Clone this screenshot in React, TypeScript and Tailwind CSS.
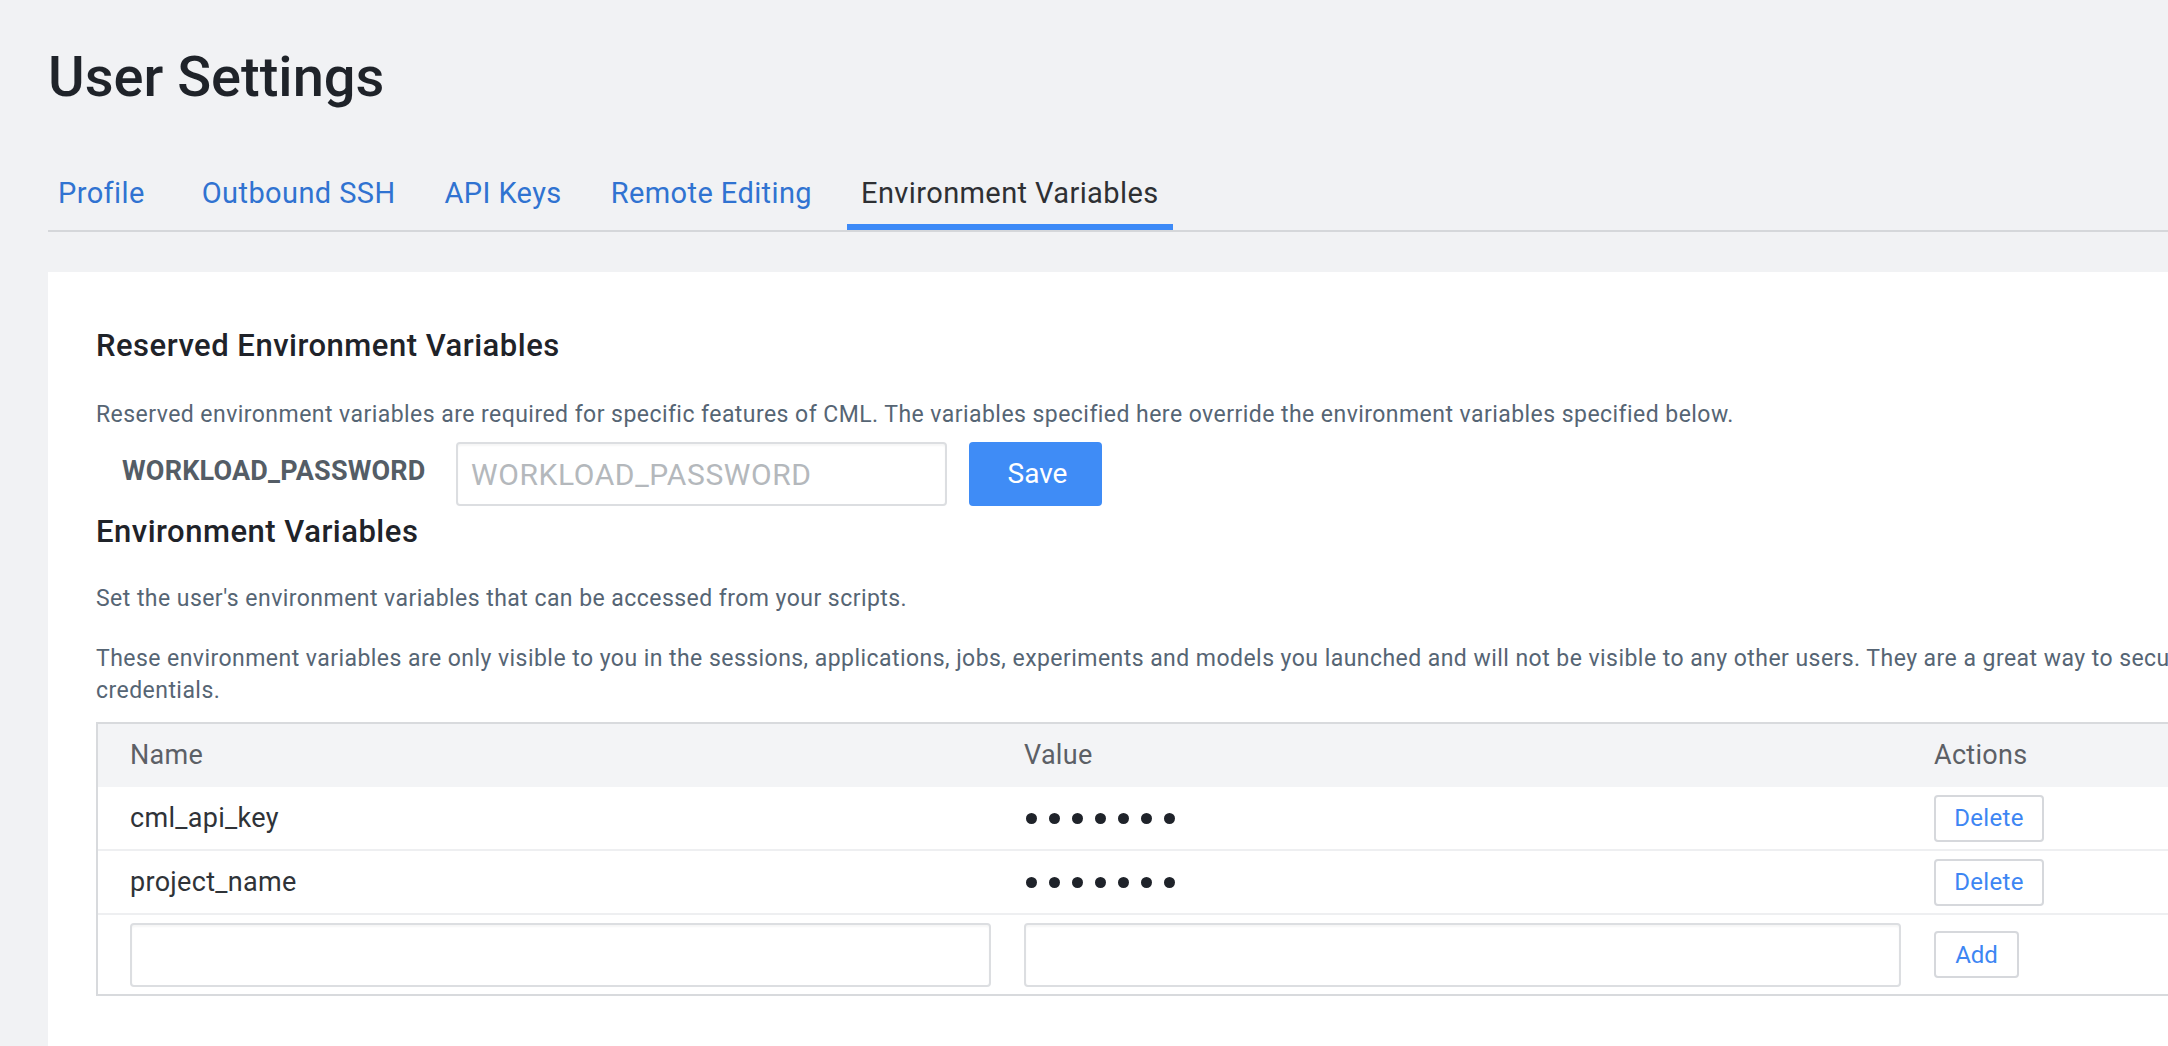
import { useState } from "react";

const tabs = ["Profile", "Outbound SSH", "API Keys", "Remote Editing", "Environment Variables"];

const envVars = [
    { name: "cml_api_key", value: "secret1" },
    { name: "project_name", value: "secret2" },
];

function Dots() {
    return (
        <div className="flex items-center gap-[12px]" aria-label="•••••••">
            {[0, 1, 2, 3, 4, 5, 6].map((i) => (
                <span key={i} className="w-[11px] h-[11px] rounded-full bg-[#1f232a]" />
            ))}
        </div>
    );
}

export default function App() {
    const [active] = useState("Environment Variables");
    const [password, setPassword] = useState("");
    const [newName, setNewName] = useState("");
    const [newValue, setNewValue] = useState("");

    return (
        <div className="min-h-screen w-full overflow-hidden bg-[#f1f2f4] font-['Roboto','Liberation_Sans',sans-serif]">
            <div className="pl-12 w-[2404px]">
                <h1 className="pt-[44px] text-[56px] leading-[1.2] font-medium text-[#1f2329]">
                    User Settings
                </h1>

                <nav className="mt-[53px] flex items-end gap-[21px] border-b-2 border-[#d5d7da]">
                    {tabs.map((tab, i) => (
                        <div
                            key={tab}
                            className={
                                (i === 0 ? "mr-[8px] pl-[10px] pr-[14px] " : "px-[14px] ") +
                                (tab === active
                                    ? "pt-[12px] pb-[14px] border-b-[6px] border-[#3d8af7] text-[29px] tracking-[0.4px] leading-[34px] text-[#2e3033]"
                                    : "pt-[12px] pb-[14px] border-b-[6px] border-transparent text-[29px] tracking-[0.4px] leading-[34px] text-[#3073d1]")
                            }
                        >
                            {tab}
                        </div>
                    ))}
                </nav>

                <div className="mt-10 bg-white px-12 pt-[56px] pb-16">
                    <h2 className="text-[31px] tracking-[0.5px] leading-[35px] font-medium text-[#1f2329]">
                        Reserved Environment Variables
                    </h2>
                    <p className="mt-[36px] text-[23px] tracking-[0.45px] leading-[32px] text-[#566574]">
                        Reserved environment variables are required for specific features of CML. The variables specified here override the environment variables specified below.
                    </p>

                    <div className="mt-[11px] flex items-center">
                        <label className="pl-[26px] w-[360px] text-[27px] tracking-[0.2px] font-bold text-[#545d66] pb-[6px]">
                            WORKLOAD_PASSWORD
                        </label>
                        <input
                            type="password"
                            value={password}
                            onChange={(e) => setPassword(e.target.value)}
                            placeholder="WORKLOAD_PASSWORD"
                            className="w-[491px] h-16 px-[13px] border-2 border-[#dcdee1] rounded-[4px] text-[30px] tracking-[0.6px] text-[#1f2329] placeholder:text-[#b4b8bc] outline-none shadow-[inset_0_2px_2px_rgba(0,0,0,0.04)]"
                        />
                        <button className="ml-[22px] w-[133px] h-16 rounded-[4px] bg-[#3f8cf6] text-white text-[28px] pl-[4px]">
                            Save
                        </button>
                    </div>

                    <h2 className="mt-[8px] text-[31px] tracking-[0.5px] leading-[35px] font-medium text-[#1f2329]">
                        Environment Variables
                    </h2>
                    <p className="mt-[34px] text-[23px] tracking-[0.45px] leading-[32px] text-[#566574]">
                        Set the user's environment variables that can be accessed from your scripts.
                    </p>
                    <p className="mt-[28px] text-[23px] tracking-[0.45px] leading-[32px] text-[#566574]">
                        These environment variables are only visible to you in the sessions, applications, jobs, experiments and models you launched and will not be visible to any other users. They are a great way to securely store your credentials.
                    </p>

                    <div className="mt-[15px] border-2 border-[#d8dadd]">
                        <div className="grid grid-cols-[893px_910px_1fr] h-[63px] items-center bg-[#f3f4f6] text-[27px] tracking-[0.3px] text-[#5c6066]">
                            <div className="pl-[32px]">Name</div>
                            <div className="pl-[33px]">Value</div>
                            <div className="pl-[33px]">Actions</div>
                        </div>
                        {envVars.map((v) => (
                            <div
                                key={v.name}
                                className="grid grid-cols-[893px_910px_1fr] h-[64px] items-center border-b-2 border-[#eeeff1] text-[27px] tracking-[0.3px] text-[#2f3338]"
                            >
                                <div className="pl-[32px]">{v.name}</div>
                                <div className="pl-[35px]">
                                    <Dots />
                                </div>
                                <div className="pl-[33px]">
                                    <button className="w-[110px] h-[47px] border-2 border-[#d6d8dc] rounded-[4px] bg-white text-[24px] text-[#3d86f3]">
                                        Delete
                                    </button>
                                </div>
                            </div>
                        ))}
                        <div className="grid grid-cols-[893px_910px_1fr] h-[79px] items-center">
                            <div className="pl-[32px]">
                                <input
                                    value={newName}
                                    onChange={(e) => setNewName(e.target.value)}
                                    className="w-[861px] h-16 border-2 border-[#dcdee1] rounded-[4px] px-3 text-[24px] outline-none shadow-[inset_0_2px_2px_rgba(0,0,0,0.04)]"
                                />
                            </div>
                            <div className="pl-[33px]">
                                <input
                                    value={newValue}
                                    onChange={(e) => setNewValue(e.target.value)}
                                    className="w-[877px] h-16 border-2 border-[#dcdee1] rounded-[4px] px-3 text-[24px] outline-none shadow-[inset_0_2px_2px_rgba(0,0,0,0.04)]"
                                />
                            </div>
                            <div className="pl-[33px]">
                                <button className="w-[85px] h-[47px] border-2 border-[#d6d8dc] rounded-[4px] bg-white text-[24px] text-[#3d86f3]">
                                    Add
                                </button>
                            </div>
                        </div>
                    </div>
                </div>
            </div>
        </div>
    );
}
